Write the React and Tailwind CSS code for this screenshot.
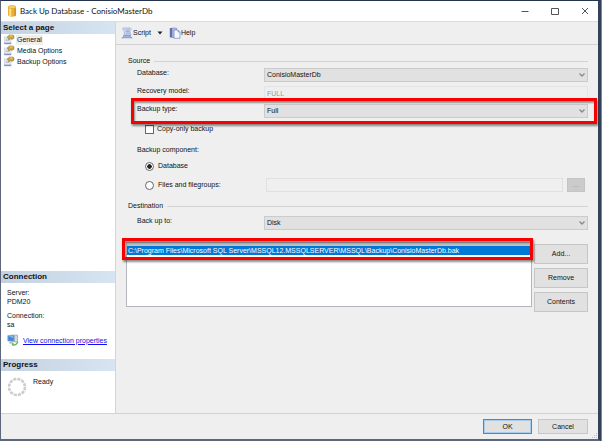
import React from "react";

const field =
  "block h-[14px] w-full appearance-none rounded-none border border-[#cbcbcb] bg-[#e1e1e1] pl-[2px] pr-4 text-[7px] leading-[12px] text-[#111]";
const button =
  "flex h-5 items-center justify-center border border-[#c6c6c6] bg-[#e1e1e1] leading-[10px]";

function Select({ id, value }) {
  return (
    <div className="relative flex-1">
      <select id={id} defaultValue={value} className={field}>
        <option>{value}</option>
      </select>
      <svg viewBox="0 0 6 4" className="pointer-events-none absolute right-[3px] top-[5px] h-1 w-1.5" fill="none" stroke="#8a8a8a" strokeWidth="1.3">
        <path d="M0.5 0.5 3 3 5.5 0.5" />
      </svg>
    </div>
  );
}

function PageIcon() {
  return (
    <svg viewBox="0 0 12 11" className="h-[11px] w-3 shrink-0">
      <rect x="1.500" y="3" width="6.500" height="6.500" fill="#eef0f8" stroke="#c3c8d6" strokeWidth="0.6" />
      <path d="M1.200 8.600h7v1.600h-7z" fill="#8494c6" />
      <path d="M2.500 5h2.500M2.500 6.600h4" stroke="#a5adc4" strokeWidth="0.7" />
      <path d="M4 3.200 6.400 1h3.800l.8 1.200v2L9 5.400 7.400 4.800 6 6 5 5.200l1-1.200z" fill="#d0a63c" stroke="#8b7434" strokeWidth="0.5" />
      <path d="M7 2h2.600" stroke="#f8df82" strokeWidth="0.8" />
    </svg>
  );
}

function DatabaseIcon() {
  return (
    <svg viewBox="0 0 10 12" className="h-3 w-2.5 shrink-0">
      <path d="M1 2v8c0 1 1.800 1.700 4 1.700S9 11 9 10V2z" fill="#e9b035" />
      <path d="M2.200 3v7.800c.6.3 1.300.4 2 .5V3z" fill="#ffe391" />
      <path d="M7.300 3v8.200C8.400 11 9 10.500 9 10V2z" fill="#cf9525" />
      <ellipse cx="5" cy="2" rx="4" ry="1.600" fill="#f8d061" stroke="#d59b25" strokeWidth="0.5" />
    </svg>
  );
}

function ScriptIcon() {
  return (
    <svg viewBox="0 0 12 12" className="h-3 w-3 shrink-0">
      <path d="M2 1h7.500c-1 .8-1 2-.6 3.200L10 8.500H4L3 4C2.700 2.800 1 2.600 2 1z" fill="#cfdcf3" stroke="#8ba0c8" strokeWidth="0.6" />
      <path d="M.8 10.800c1.500 0 2-1.200 1.800-2.600H9c.2 1.500 1 2.600 2.200 2.600z" fill="#9db4df" stroke="#6c85b6" strokeWidth="0.6" />
      <path d="M4.500 3h3.500M4.700 4.600h3.600M5 6.200h3.800" stroke="#7f97c5" strokeWidth="0.7" />
      <path d="M9.500 1c1.200.2 1.200 1.400.4 2H9" fill="#e8effc" stroke="#8ba0c8" strokeWidth="0.5" />
    </svg>
  );
}

function HelpIcon() {
  return (
    <svg viewBox="0 0 12 12" className="h-3 w-3 shrink-0">
      <path d="M.8 1h2.800v9.500H.8z" fill="#5f70aa" />
      <path d="M3 1h4.500v9.500H3z" fill="#b4c1e3" stroke="#6577b2" strokeWidth="0.5" />
      <path d="M5 3h4l2 2v6.300H5z" fill="#f4f7ff" stroke="#6273a8" strokeWidth="0.6" />
      <path d="M9 3v2h2" fill="#bccaec" stroke="#6273a8" strokeWidth="0.5" />
    </svg>
  );
}

function ServerIcon() {
  return (
    <svg viewBox="0 0 12 12" className="h-3 w-3 shrink-0">
      <path d="M7.500 1h3v7h-3z" fill="#d5d9de" stroke="#8b939d" strokeWidth="0.6" />
      <path d="M.8 1.500 7 1v6.500l-6.200-.6z" fill="#3d87dc" stroke="#9aaabd" strokeWidth="0.7" />
      <path d="M1.600 2.300 6 2v2z" fill="#83bdf5" />
      <path d="M2.500 8.200h3.800v1.200H2z" fill="#a2a9b3" />
      <path d="M5 10.600c2.500 1 5 0 5.800-3M5 10.600l1.600-1.200M5 10.600l1.700 1" fill="none" stroke="#4fb74c" strokeWidth="1.200" />
    </svg>
  );
}

function PanelHeading({ children }) {
  return (
    <h2 className="h-[12px] bg-linear-to-r from-[#c4d1e0] to-[#d7e4f2] pl-[2px] text-[8px] font-bold leading-[12px]">
      {children}
    </h2>
  );
}

function SectionHeading({ children }) {
  return (
    <div className="flex h-[10px] items-center gap-1">
      <h3>{children}</h3>
      <div className="h-px flex-1 bg-[#d2d2d2]" />
    </div>
  );
}

const highlight =
  "pointer-events-none absolute border-[3px] border-[#f80000] shadow-[1px_2px_2px_rgba(0,0,0,0.45),inset_1px_2px_2px_rgba(0,0,0,0.4)]";

function Sidebar() {
  return (
    <aside className="flex w-[115px] shrink-0 flex-col border-r border-[#d4d4d4] bg-white">
      <PanelHeading>Select a page</PanelHeading>
      <nav>
        {["General", "Media Options", "Backup Options"].map((name, i) => (
          <a key={name} href="#page" className="flex h-[11px] items-center gap-px pl-[2px]">
            <PageIcon />
            <span className={i === 0 ? "bg-[#efefef] px-px" : "px-px"}>{name}</span>
          </a>
        ))}
      </nav>
      <div className="flex-1" />
      <PanelHeading>Connection</PanelHeading>
      <div className="flex h-[76px] flex-col gap-[5px] pl-[6px] pt-[5px] leading-[9px]">
        <dl>
          <dt>Server:</dt>
          <dd>PDM20</dd>
        </dl>
        <dl>
          <dt>Connection:</dt>
          <dd>sa</dd>
        </dl>
        <a href="#properties" className="flex items-center gap-[4px] whitespace-nowrap text-[#1010ee] underline">
          <ServerIcon />
          View connection properties
        </a>
      </div>
      <PanelHeading>Progress</PanelHeading>
      <div className="flex h-[42px] gap-[6px] pl-[6px] pt-[6px]">
        <svg viewBox="0 0 20 20" className="h-5 w-5">
          <circle cx="10" cy="10" r="8" fill="none" stroke="#cdcdcd" strokeWidth="2.600" strokeDasharray="3.200 0.990" />
        </svg>
        <span>Ready</span>
      </div>
    </aside>
  );
}

export default function App() {
  return (
    <div className="bg-[#7d8696] pr-px font-['Liberation_Sans',Arial,sans-serif] text-[7px] leading-[10px] text-[#111]">
      <div className="flex min-h-screen flex-col border-b-2 border-l border-r-[3px] border-t border-b-[#5c667a] border-l-[#5c667a] border-r-[#34415b] border-t-[#26334f] bg-[#efefef]">
        <header className="flex h-[21px] shrink-0 items-center border-b border-[#dcdcdc] bg-white pl-[6px] pr-[9px]">
          <DatabaseIcon />
          <h1 className="flex-1 pl-[3px] font-['Lato','Open_Sans',sans-serif] text-[8px]">Back Up Database - ConisioMasterDb</h1>
          <div className="flex gap-[22px] text-[#555]">
            <button aria-label="Minimize">
              <svg viewBox="0 0 8 8" className="h-2 w-2" stroke="currentColor"><path d="M0.500 4.500h7" /></svg>
            </button>
            <button aria-label="Maximize">
              <svg viewBox="0 0 8 8" className="h-2 w-2" fill="none" stroke="currentColor"><path d="M.5 1.500h7v6h-7z" /></svg>
            </button>
            <button aria-label="Close">
              <svg viewBox="0 0 8 8" className="h-2 w-2" stroke="currentColor"><path d="m1 1 6 6M7 1 1 7" /></svg>
            </button>
          </div>
        </header>

        <div className="flex flex-1">
          <Sidebar />
          <main className="flex-1">
            <div className="flex h-[23px] items-center border-b border-[#d2d2d2] pl-[5px]">
              <button className="flex items-center">
                <ScriptIcon />
                Script
              </button>
              <button aria-label="Script options" className="px-[6px]">
                <svg viewBox="0 0 6 4" className="h-1 w-1.5"><path d="M.5.5h5L3 3.500z" fill="#222" /></svg>
              </button>
              <button className="flex items-center">
                <HelpIcon />
                Help
              </button>
            </div>

            <form className="pl-3 pr-[10px] pt-[11px]" onSubmit={(e) => e.preventDefault()}>
              <SectionHeading>Source</SectionHeading>
              <div className="flex flex-col gap-[4px] pl-[9px] pt-[2px]">
                <div className="flex">
                  <label htmlFor="database" className="w-[127px]">Database:</label>
                  <Select id="database" value="ConisioMasterDb" />
                </div>
                <div className="flex">
                  <label htmlFor="recovery" className="w-[127px]">Recovery model:</label>
                  <input id="recovery" readOnly value="FULL" className="h-[14px] min-w-0 flex-1 border border-[#e4e4e4] bg-[#efefef] pl-[2px] text-[#999]" />
                </div>
                <div className="relative flex">
                  <label htmlFor="type" className="w-[127px]">Backup type:</label>
                  <Select id="type" value="Full" />
                  <div className={`${highlight} -bottom-[6px] -left-[6px] -right-[9px] -top-[6px]`} />
                </div>
              </div>

              <div className="flex flex-col items-start pl-[9px] pt-[6px]">
                <label className="ml-[8px] flex items-center gap-[3px]">
                  <input type="checkbox" className="h-[9px] w-[9px] appearance-none border border-[#666] bg-white" />
                  Copy-only backup
                </label>
                <p className="pt-[11px]">Backup component:</p>
                <label className="ml-[8px] mt-[6px] flex items-center gap-1">
                  <input type="radio" name="component" defaultChecked className="h-[9px] w-[9px] appearance-none rounded-full border border-[#666] bg-white bg-radial from-[#222] from-40% to-white to-50%" />
                  Database
                </label>
              </div>
              <div className="flex items-center pl-[17px] pr-[3px] pt-[7px]">
                <label className="flex w-[121px] items-center gap-1">
                  <input type="radio" name="component" className="h-[9px] w-[9px] appearance-none rounded-full border border-[#666] bg-white" />
                  Files and filegroups:
                </label>
                <input aria-label="Files and filegroups" disabled className="h-[14px] min-w-0 flex-1 border border-[#e0e0e0] bg-[#efefef]" />
                <button type="button" disabled className="ml-[4px] h-[14px] w-[18px] border border-[#c4c4c4] bg-[#cbcbcb] text-[#999]">...</button>
              </div>

              <div className="pt-[9px]">
                <SectionHeading>Destination</SectionHeading>
              </div>
              <div className="flex pl-[9px] pt-[5px]">
                <label htmlFor="target" className="w-[127px]">Back up to:</label>
                <Select id="target" value="Disk" />
              </div>

              <div className="-ml-[2px] flex gap-[2px] pt-[12px]">
                <div className="relative mb-[5px] flex-1 border border-[#b4b6bd] bg-white">
                  <ul aria-label="Backup destinations" className="bg-[#c0c0c0] pt-[3px]">
                    <li className="h-[9px] whitespace-nowrap bg-[#0078d7] pl-px leading-[9px] text-white">
                      C:\Program Files\Microsoft SQL Server\MSSQL12.MSSQLSERVER\MSSQL\Backup\ConisioMasterDb.bak
                    </li>
                  </ul>
                  <div className={`${highlight} -left-[5px] -right-[2px] -top-[5px] h-[22px]`} />
                </div>
                <div className="flex w-[54px] flex-col gap-[4px] pt-[2px]">
                  <button type="button" className={button}>Add...</button>
                  <button type="button" className={button}>Remove</button>
                  <button type="button" className={button}>Contents</button>
                </div>
              </div>
            </form>
          </main>
        </div>

        <footer className="relative flex h-[26px] shrink-0 items-start justify-end gap-[6px] border-t border-[#d2d2d2] pr-[10px] pt-[5px]">
          <button className="h-[15px] w-[49px] border border-[#2f8fe0] bg-[#e1e1e1] shadow-[inset_0_0_0_1px_#a9cdec]">OK</button>
          <button className="h-[15px] w-[50px] border border-[#c6c6c6] bg-[#e1e1e1]">Cancel</button>
          <svg viewBox="0 0 6 6" className="absolute bottom-0 right-0 h-1.5 w-1.5" fill="#bdbdbd">
            <path d="M4 0h1v1H4zM2 2h1v1H2zM4 2h1v1H4zM0 4h1v1H0zM2 4h1v1H2zM4 4h1v1H4z" />
          </svg>
        </footer>
      </div>
    </div>
  );
}
